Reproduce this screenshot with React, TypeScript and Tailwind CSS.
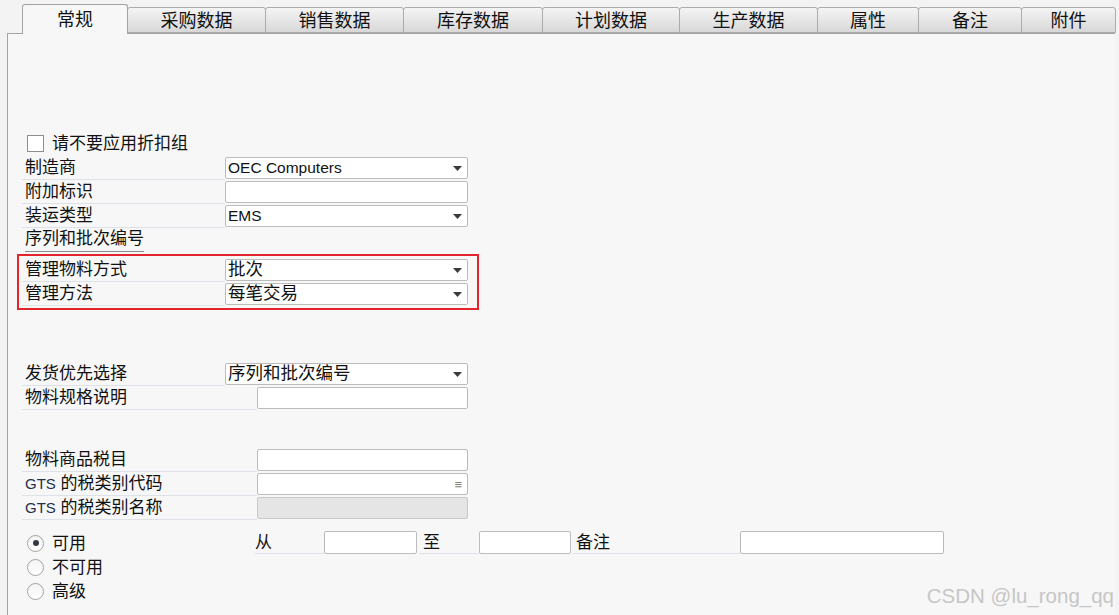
import React from 'react';

const tabs = [
  { name: '采购数据', w: 'w-[139px]' },
  { name: '销售数据', w: 'w-[139px]' },
  { name: '库存数据', w: 'w-[140px]' },
  { name: '计划数据', w: 'w-[138px]' },
  { name: '生产数据', w: 'w-[139px]' },
  { name: '属性', w: 'w-[102px]' },
  { name: '备注', w: 'w-[104px]' },
  { name: '附件', w: 'w-[95px]' },
];

// small dropdown triangle
const Caret = () => (
  <svg width="9" height="5" viewBox="0 0 9 5" className="shrink-0">
    <polygon points="0,0 9,0 4.5,5" fill="#3a3a3a" />
  </svg>
);

function Field({
  label,
  wide,
  value,
  latin,
  select,
  menu,
  disabled,
}: {
  label: React.ReactNode;
  wide?: boolean;
  value?: string;
  latin?: boolean;
  select?: boolean;
  menu?: boolean;
  disabled?: boolean;
}) {
  return (
    <div className="flex h-6 w-[446px]">
      <div
        className={`${wide ? 'w-[235px]' : 'w-[203px]'} flex items-center border-b border-[#dde2e8] pl-[3px] text-[17px] leading-none`}
      >
        {label}
      </div>
      <div className="flex-1 py-px">
        <div
          className={`flex h-[22px] items-center justify-between rounded-[2px] border ${disabled ? 'border-[#c9c9c9] bg-[#e5e5e5]' : 'border-[#bcbcbc] bg-white'} pl-[2px] pr-[5px]`}
        >
          <span className={`${latin ? 'text-[15.5px]' : 'text-[17.5px]'} leading-none`}>{value}</span>
          {select && <Caret />}
          {menu && <span className="text-[13px] leading-none text-[#808080]">≡</span>}
        </div>
      </div>
    </div>
  );
}

function Radio({ label, checked }: { label: string; checked?: boolean }) {
  return (
    <div className="flex h-6 items-center pl-[5px]">
      <span className="flex h-[17px] w-[17px] items-center justify-center rounded-full border border-[#a3a3a3] bg-linear-to-b from-[#f4f4f4] to-white">
        {checked && <span className="h-[6px] w-[6px] rounded-full bg-[#333a46]" />}
      </span>
      <span className="ml-[8px] text-[17px] leading-none">{label}</span>
    </div>
  );
}

const Gts = ({ rest }: { rest: string }) => (
  <span>
    <span className="text-[15px] text-[#22324d]">GTS</span> {rest}
  </span>
);

export default function App() {
  return (
    <div className="relative h-[615px] w-[1119px] overflow-hidden bg-[#f3f3f3] font-['Liberation_Sans','Noto_Sans_CJK_SC',sans-serif] text-[#111]">
      {/* tab strip */}
      <div className="flex h-[33px] items-end pl-[22px]">
        <div className="relative z-10 mb-[-1px] flex h-[30px] w-[106px] items-center justify-center rounded-t-[3px] border border-b-0 border-[#a3a3a3] bg-[#f7f7f7] pt-[1px] text-[18px] leading-none">
          常规
        </div>
        {tabs.map((t) => (
          <div
            key={t.name}
            className={`${t.w} -ml-px flex h-[26px] items-center justify-center rounded-t-[3px] border border-[#ababab] bg-linear-to-b from-[#f4f4f4] to-[#d8d8d8] pt-[1px] text-[18px] leading-none`}
          >
            {t.name}
          </div>
        ))}
      </div>

      {/* page body */}
      <div className="ml-[7px] h-[582px] w-[1108px] border-l border-t border-[#a3a3a3] bg-[#f7f7f7] pl-[14px] pt-[96px]">
        <div className="flex h-[26px] items-center pl-[5px]">
          <span className="h-[17px] w-[17px] border border-[#8e8e8e] bg-white" />
          <span className="ml-[8px] text-[17px] leading-none">请不要应用折扣组</span>
        </div>

        <Field label="制造商" value="OEC Computers" latin select />
        <Field label="附加标识" />
        <Field label="装运类型" value="EMS" latin select />

        {/* section header with underline */}
        <div className="flex h-6 items-end pl-[3px]">
          <div className="flex flex-col">
            <span className="text-[17px] leading-none">序列和批次编号</span>
            <div className="mt-[4px] h-px bg-[#8c8c8c]" />
          </div>
        </div>

        <div className="ml-[-5px] mt-[2px] w-[462px] border-2 border-[#e3242b] py-[2px] pl-[3px]">
          <Field label="管理物料方式" value="批次" select />
          <Field label="管理方法" value="每笔交易" select />
        </div>

        <div className="mt-[52px]">
          <Field label="发货优先选择" value="序列和批次编号" select />
          <Field label="物料规格说明" wide />
        </div>

        <div className="mt-[38px]">
          <Field label="物料商品税目" wide />
          <Field label={<Gts rest="的税类别代码" />} wide menu />
          <Field label={<Gts rest="的税类别名称" />} wide disabled />
        </div>

        <div className="mt-[11px] flex">
          <div className="flex w-[233px] flex-col">
            <Radio label="可用" checked />
            <Radio label="不可用" />
            <Radio label="高级" />
          </div>
          <div className="flex h-[23px]">
            <div className="flex w-[69px] items-center border-b border-[#dde2e8] text-[17px] leading-none">从</div>
            <div className="w-[93px] rounded-[2px] border border-[#bcbcbc] bg-white" />
            <div className="ml-[2px] flex w-[60px] items-center border-b border-[#dde2e8] pl-[4px] text-[17px] leading-none">至</div>
            <div className="w-[92px] rounded-[2px] border border-[#bcbcbc] bg-white" />
            <div className="ml-[2px] flex w-[167px] items-center border-b border-[#dde2e8] pl-[3px] text-[17px] leading-none">备注</div>
            <div className="w-[204px] rounded-[2px] border border-[#bcbcbc] bg-white" />
          </div>
        </div>
      </div>

      {/* watermark */}
      <div className="absolute bottom-[9px] right-[5px] text-[20.5px] leading-none text-[#c6c6c6]">
        CSDN @lu_rong_qq
      </div>
    </div>
  );
}
